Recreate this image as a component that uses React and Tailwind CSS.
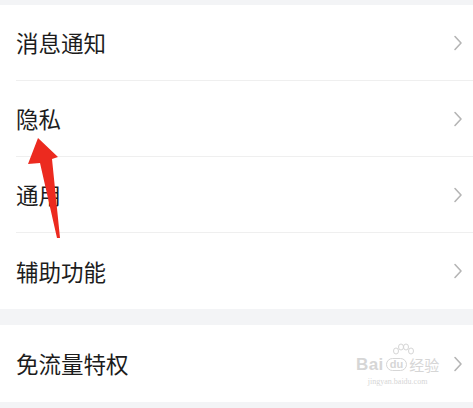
import React from "react";

function Chevron() {
  return (
    <svg width="10" height="16" viewBox="0 0 10 16" className="shrink-0">
      <path d="M2 1.5 L8 8 L2 14.5" fill="none" stroke="#b5b5b5" strokeWidth="1.6" strokeLinecap="round" strokeLinejoin="round" />
    </svg>
  );
}

function Row({ label, last }) {
  return (
    <div className="pl-4">
      <div className={`flex items-center justify-between pr-[10px] h-[76px] ${last ? "" : "border-b border-[#efefef]"}`}>
        <span className="text-[22.5px] text-[#1c1c1c] leading-none">{label}</span>
        <Chevron />
      </div>
    </div>
  );
}

export default function App() {
  return (
    <div
      className="relative w-[473px] h-[408px] bg-[#f3f4f6] overflow-hidden"
      style={{ fontFamily: '"Noto Sans CJK SC", "Noto Sans", sans-serif' }}
    >
      <div className="pt-[5px]">
        <div className="bg-white">
          <Row label="消息通知" />
          <Row label="隐私" />
          <Row label="通用" />
          <Row label="辅助功能" last />
        </div>
        <div className="h-[16px]" />
        <div className="bg-white h-[77px] pl-4 pr-[10px] flex items-center justify-between">
          <span className="text-[22.5px] text-[#1c1c1c] leading-none">免流量特权</span>
          <Chevron />
        </div>
      </div>

      <div className="absolute left-[356px] top-[343px] flex flex-col items-center text-[#d6d6d6] pointer-events-none">
        <svg width="26" height="16" viewBox="0 0 26 16" className="ml-[10px] -mb-[3px]">
          <g fill="none" stroke="#d6d6d6" strokeWidth="1">
            <ellipse cx="6" cy="8" rx="2.5" ry="3" />
            <ellipse cx="11" cy="4" rx="2.5" ry="3" />
            <ellipse cx="16" cy="4" rx="2.5" ry="3" />
            <ellipse cx="21" cy="8" rx="2.5" ry="3" />
          </g>
        </svg>
        <div className="flex items-center gap-[2px] leading-none">
          <span className="text-[17px] font-bold tracking-wide" style={{ fontFamily: '"Liberation Sans", sans-serif' }}>Bai</span>
          <span className="text-[11px] font-bold border border-[#d6d6d6] rounded-full px-[3px]" style={{ fontFamily: '"Liberation Sans", sans-serif' }}>du</span>
          <span className="text-[15px]">经验</span>
        </div>
        <span className="text-[8px] mt-[3px]" style={{ fontFamily: '"Liberation Serif", serif' }}>jingyan.baidu.com</span>
      </div>

      <svg className="absolute left-0 top-0 pointer-events-none" width="473" height="408">
        <polygon points="38,138 58,157 52,159 60,238 57,238 40,163 28,164" fill="#ec2a1f" />
      </svg>
    </div>
  );
}
